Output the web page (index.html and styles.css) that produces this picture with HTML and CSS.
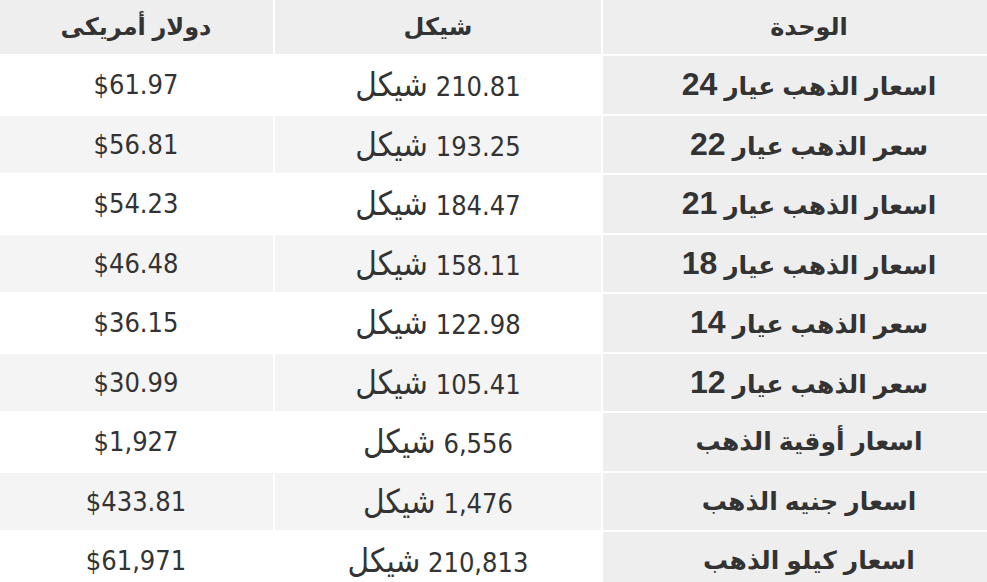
FILE: index.html
```html
<!DOCTYPE html>
<html lang="ar" dir="rtl">
<head>
<meta charset="utf-8">
<title>اسعار الذهب</title>
<link rel="stylesheet" href="styles.css">
</head>
<body>
<table class="prices">
  <thead>
    <tr class="head-row">
      <th class="col-unit">الوحدة</th>
      <th class="col-ils">شيكل</th>
      <th class="col-usd">دولار أمريكى</th>
    </tr>
  </thead>
  <tbody>
    <tr><th class="unit">اسعار الذهب عيار <span class="num">24</span></th><td class="val">210.81 <span class="cur">شيكل</span></td><td class="val">$61.97</td></tr>
    <tr><th class="unit">سعر الذهب عيار <span class="num">22</span></th><td class="val">193.25 <span class="cur">شيكل</span></td><td class="val">$56.81</td></tr>
    <tr><th class="unit">اسعار الذهب عيار <span class="num">21</span></th><td class="val">184.47 <span class="cur">شيكل</span></td><td class="val">$54.23</td></tr>
    <tr><th class="unit">اسعار الذهب عيار <span class="num">18</span></th><td class="val">158.11 <span class="cur">شيكل</span></td><td class="val">$46.48</td></tr>
    <tr><th class="unit">سعر الذهب عيار <span class="num">14</span></th><td class="val">122.98 <span class="cur">شيكل</span></td><td class="val">$36.15</td></tr>
    <tr><th class="unit">سعر الذهب عيار <span class="num">12</span></th><td class="val">105.41 <span class="cur">شيكل</span></td><td class="val">$30.99</td></tr>
    <tr><th class="unit">اسعار أوقية الذهب</th><td class="val">6,556 <span class="cur">شيكل</span></td><td class="val">$1,927</td></tr>
    <tr><th class="unit">اسعار جنيه الذهب</th><td class="val">1,476 <span class="cur">شيكل</span></td><td class="val">$433.81</td></tr>
    <tr><th class="unit">اسعار كيلو الذهب</th><td class="val">210,813 <span class="cur">شيكل</span></td><td class="val">$61,971</td></tr>
  </tbody>
</table>
</body>
</html>
```
FILE: styles.css
```css
html, body {
  margin: 0;
  padding: 0;
  background: #ffffff;
  overflow: hidden;
}

.prices {
  border-collapse: separate;
  border-spacing: 2px;
  margin: -2px -2px 0 -2px;
  width: 991px;
  table-layout: fixed;
  color: #333333;
}

.col-unit { width: 356px; }
.col-ils { width: 326px; }
.col-usd { width: 274px; }

.head-row th {
  height: 54px;
  padding: 0;
  background: #eeeeee;
  font-family: "Liberation Sans", "DejaVu Sans", sans-serif;
  font-weight: bold;
  font-size: 24px;
  text-align: center;
  vertical-align: middle;
}

.head-row .col-unit {
  padding-left: 28px;
}

tbody tr {
  height: 57.5px;
}

.unit {
  padding: 0 0 0 28px;
  background: #eeeeee;
  font-family: "Liberation Sans", "DejaVu Sans", sans-serif;
  font-weight: bold;
  font-size: 25px;
  text-align: center;
  vertical-align: middle;
}

.unit .num {
  font-size: 32px;
}

.val {
  padding: 0;
  background: #ffffff;
  font-family: "DejaVu Sans Condensed", "DejaVu Sans", sans-serif;
  font-stretch: condensed;
  font-size: 27px;
  text-align: center;
  vertical-align: middle;
}

.val .cur {
  font-size: 33px;
}

tbody tr:nth-child(even) .val {
  background: #f4f4f4;
}
```
